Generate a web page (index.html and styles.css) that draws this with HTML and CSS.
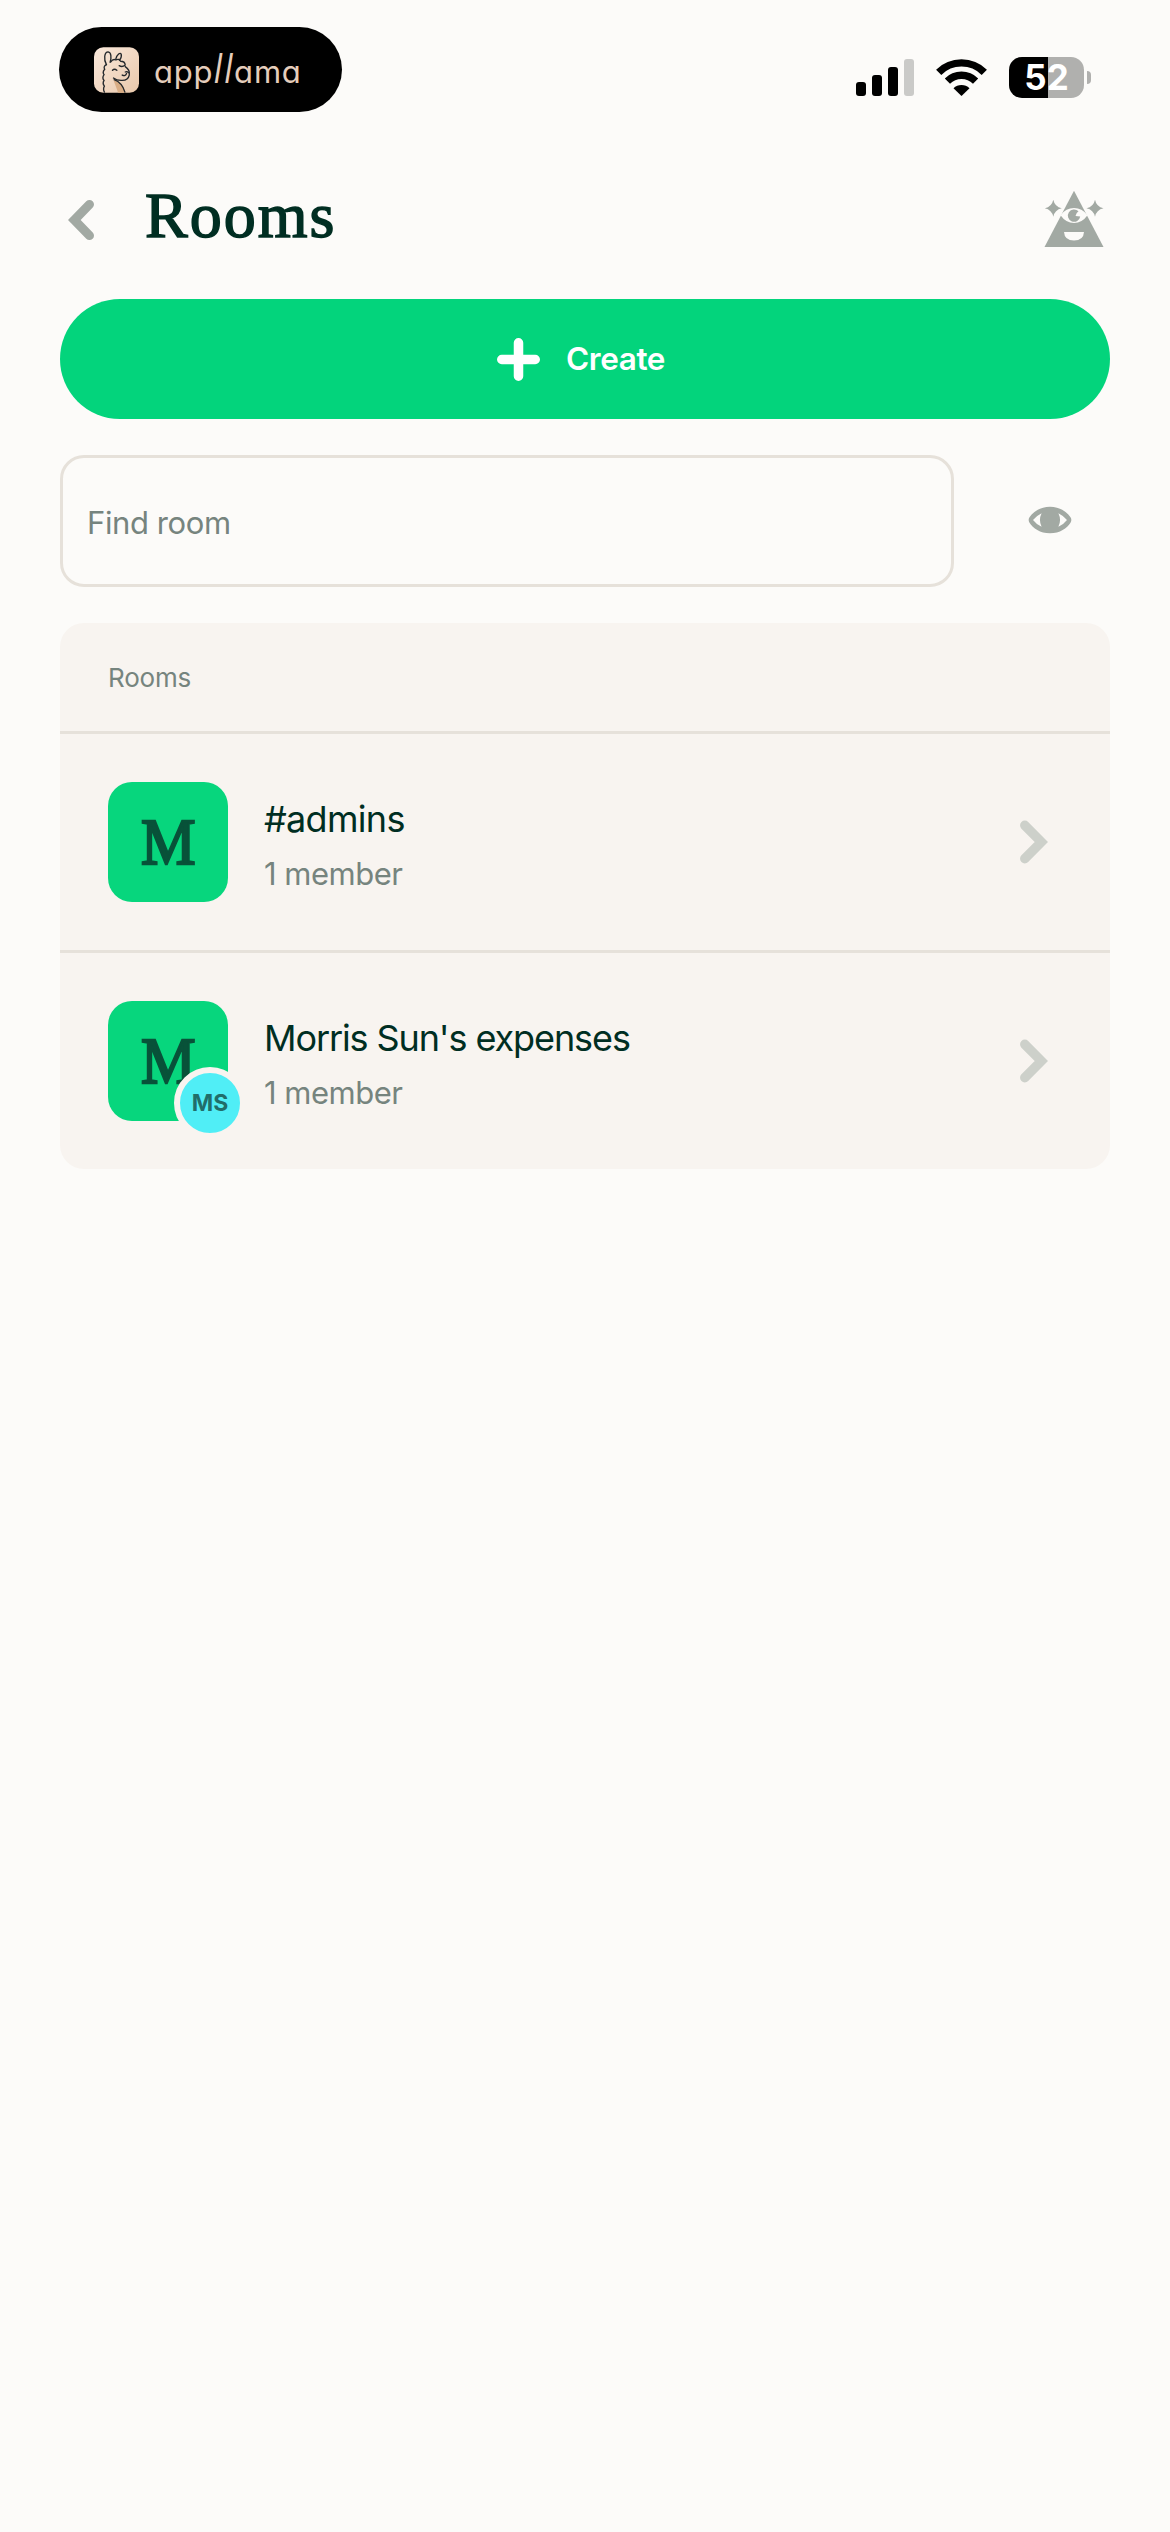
FILE: index.html
```html
<!DOCTYPE html>
<html lang="en">
<head>
<meta charset="utf-8">
<title>Rooms</title>
<link rel="stylesheet" href="styles.css">
</head>
<body>
<header class="status">
  <div class="brand">
    <svg class="brand-icon" viewBox="0 0 134 136">
      <defs><linearGradient id="sand" x1="0" y1="0" x2="1" y2="1"><stop offset="0" stop-color="#fae9dc"/><stop offset="1" stop-color="#e9c8ab"/></linearGradient></defs>
      <rect width="134" height="136" rx="28" fill="url(#sand)"/>
      <path d="M58 98 Q76 104 88 120 L94 136 H72 Z" fill="#d9ad85"/>
      <g fill="none" stroke="#24282c" stroke-width="4" stroke-linecap="round" stroke-linejoin="round">
        <path d="M37 52 C28 36 31 14 42 14 C52 15 52 32 48 45"/>
        <path d="M65 35 C69 21 78 15 81 21 C83 28 79 35 76 39"/>
        <path d="M50 44 Q56 34 65 38 Q74 33 79 42 Q92 42 93 53 Q84 61 75 55"/>
        <path d="M37 52 Q27 57 32 66 Q24 74 30 82 Q23 91 30 99 Q24 108 31 116 Q26 124 31 134"/>
        <path d="M93 58 Q108 68 105 83 Q102 98 84 99 Q68 100 58 92"/>
        <path d="M60 97 Q84 106 92 134"/>
        <path d="M55 69 Q61 63 68 69M93 74 Q98 71 103 76M97 78 Q94 88 84 83"/>
      </g>
    </svg>
    <span class="wordmark">app<span class="tall">ll</span>ama</span>
  </div>
  <div class="indicators">
    <svg width="58" height="38" viewBox="0 0 58 38">
      <rect x="0" y="23" width="10" height="14" rx="3"/><rect x="16" y="16" width="10" height="21" rx="3"/><rect x="32" y="8" width="10" height="29" rx="3"/><rect x="48" y="0" width="10" height="37" rx="3" fill="#cacac8"/>
    </svg>
    <svg class="wifi" width="51" height="38" viewBox="0 0 51 38">
      <g fill="none" stroke="#000" stroke-width="7.4"><path d="M2.7 13.3 A32.3 32.3 0 0 1 48.3 13.3"/><path d="M11.4 22.1 A20 20 0 0 1 39.6 22.1"/></g>
      <path d="M17.5 29.2 A11.4 11.4 0 0 1 33.5 29.2 L25.5 37 Z"/>
    </svg>
    <div class="battery"><span class="level">52</span></div>
    <span class="nub"></span>
  </div>
</header>

<main>
  <div class="titlebar">
    <svg class="back" width="30" height="44" viewBox="0 0 30 44"><path d="M23.5 6.4 L8.3 22 L23.5 37.6" fill="none" stroke="#a2a9a3" stroke-width="9" stroke-linecap="round"/></svg>
    <h1>Rooms</h1>
    <svg class="pyramid" width="60" height="58" viewBox="0 0 60 58">
      <path fill="#a2a9a3" d="M30 .8 L59.5 57 H.5 Z"/>
      <path fill="#a2a9a3" stroke="#fcfbf9" stroke-width="2" paint-order="stroke" d="M9.3 9.8 Q10.7 16.8 17.8 18.3 Q10.7 19.8 9.3 26.8 Q7.8 19.8 .8 18.3 Q7.8 16.8 9.3 9.8 Z M51 9.8 Q52.4 16.8 59.5 18.3 Q52.4 19.8 51 26.8 Q49.5 19.8 42.5 18.3 Q49.5 16.8 51 9.8 Z"/>
      <path fill="#fcfbf9" d="M16.5 25.2 Q22 18 30 18 Q38 18 43.5 25.2 Q38 33 30 33 Q22 33 16.5 25.2 Z M20 42 H40 Q39.5 50.5 30 50.5 Q20.5 50.5 20 42 Z"/>
      <path fill="#a2a9a3" d="M34.5 21.3 A6.2 6.2 0 1 0 36.2 26.5 L31.5 26 Q32.5 22.5 34.5 21.3 Z"/>
    </svg>
  </div>

  <button class="create">
    <svg width="43" height="43" viewBox="0 0 43 43"><path d="M21.5 4.75 V38.25 M4.75 21.5 H38.25" stroke="#fff" stroke-width="9.5" stroke-linecap="round"/></svg>
    <span>Create</span>
  </button>

  <div class="search">
    <div class="field"><span>Find room</span></div>
    <svg class="eye" width="44" height="28" viewBox="0 0 44 28">
      <path fill="#a2a9a3" fill-rule="evenodd" d="M22 .7 C32 .7 39 6 42.5 11.3 Q44.2 14 42.5 16.7 C39 22 32 27.3 22 27.3 C12 27.3 5 22 1.5 16.7 Q-.2 14 1.5 11.3 C5 6 12 .7 22 .7 Z M13.6 7.2 Q8 10 5 14 Q8 18 13.6 20.8 Q10.3 14 13.6 7.2 Z M30.4 7.2 Q36 10 39 14 Q36 18 30.4 20.8 Q33.7 14 30.4 7.2 Z"/>
    </svg>
  </div>

  <section class="card">
    <div class="card-head"><span>Rooms</span></div>
    <div class="row">
      <div class="avatar"><span class="initial">M</span></div>
      <div class="info"><span class="name">#admins</span><span class="members">1 member</span></div>
      <svg class="go" width="30" height="44" viewBox="0 0 30 44"><path d="M5.8 5.3 L22.3 22 L5.8 38.7" fill="none" stroke="#cdd0ca" stroke-width="9.5" stroke-linecap="round"/></svg>
    </div>
    <div class="row">
      <div class="avatar"><span class="initial">M</span><span class="badge">MS</span></div>
      <div class="info"><span class="name long">Morris Sun's expenses</span><span class="members">1 member</span></div>
      <svg class="go" width="30" height="44" viewBox="0 0 30 44"><path d="M5.8 5.3 L22.3 22 L5.8 38.7" fill="none" stroke="#cdd0ca" stroke-width="9.5" stroke-linecap="round"/></svg>
    </div>
  </section>
</main>
</body>
</html>
```
FILE: styles.css
```css
* { box-sizing: border-box; }
body {
  margin: 0;
  min-height: 2532px;
  background: #fcfbf9;
  color: #002e22;
  font-family: Inter, "Liberation Sans", sans-serif;
}
svg { display: block; flex: none; }
.status {
  height: 164px;
  padding: 27px 79px 0 59px;
  display: flex;
  justify-content: space-between;
  align-items: flex-start;
}
.brand {
  width: 283px;
  height: 85px;
  padding-left: 35px;
  border-radius: 43px;
  background: #000;
  display: flex;
  align-items: center;
  gap: 15px;
}
.brand-icon { width: 45px; height: 46px; }
.wordmark {
  color: #e5cdbb;
  font-size: 31px;
  font-weight: 400;
  line-height: 40px;
  letter-spacing: .8px;
  font-feature-settings: "cv11";
}
.tall { font-size: 41px; font-weight: 300; font-style: italic; }
.indicators { display: flex; align-items: flex-start; padding-top: 30px; height: 80px; }
.indicators > svg { margin-top: 2px; }
.indicators > .wifi { margin-left: 22px; }
.battery {
  width: 75px;
  height: 41px;
  margin-left: 22px;
  border-radius: 13px;
  background: linear-gradient(90deg, #000 39px, #b0b0ae 39px);
  color: #fff;
  display: flex;
  align-items: center;
  justify-content: center;
}
.level { font-size: 35px; font-weight: 700; line-height: 41px; }
.nub { width: 4px; height: 13px; margin: 14px 0 0 3px; border-radius: 0 5px 5px 0; background: #b0b0ae; }

main { padding: 0 60px; }
.titlebar { height: 135px; display: flex; align-items: flex-start; }
.back { margin: 34px 0 0 6px; }
h1 {
  margin: 16px 0 0 49px;
  font: 400 64px/72px "Liberation Serif", serif;
  -webkit-text-stroke: 1.5px #002e22;
  letter-spacing: 2px;
}
.pyramid { margin: 26px 6px 0 auto; }
.create {
  width: 100%;
  height: 120px;
  padding: 0 8px 0 0;
  border: 0;
  border-radius: 60px;
  background: #03d47c;
  color: #fff;
  font: 600 31.5px/40px Inter, "Liberation Sans", sans-serif;
  letter-spacing: -.4px;
  display: flex;
  align-items: center;
  justify-content: center;
  gap: 26px;
}
.create span { margin-top: -1px; }
.search { display: flex; align-items: center; margin-top: 36px; height: 132px; }
.field {
  width: 894px;
  height: 132px;
  padding: 3px 0 0 24px;
  border: 3px solid #e6e1da;
  border-radius: 24px;
  display: flex;
  align-items: center;
  font-size: 31px;
  letter-spacing: -.4px;
  color: #76847e;
}
.eye { margin: 0 0 3px 74px; }
.card {
  margin-top: 36px;
  border-radius: 24px;
  background: #f8f4f0;
}
.card-head {
  height: 108px;
  padding-left: 48px;
  display: flex;
  align-items: center;
  font-size: 26px;
  letter-spacing: -.2px;
  color: #76847e;
}
.row {
  height: 219px;
  padding: 0 60px 0 48px;
  border-top: 3px solid #e6e1da;
  display: flex;
  align-items: center;
}
.avatar {
  position: relative;
  width: 120px;
  height: 120px;
  border-radius: 24px;
  background: #07d67d;
  display: flex;
  align-items: center;
  justify-content: center;
}
.initial {
  font: 400 66px/80px "Liberation Serif", serif;
  color: #085239;
  -webkit-text-stroke: 2.4px #085239;
  transform: scaleX(.93);
}
.badge {
  position: absolute;
  left: 66px;
  top: 66px;
  width: 72px;
  height: 72px;
  border: 6px solid #f8f4f0;
  border-radius: 50%;
  background: #50eef6;
  color: #216e6a;
  font-size: 23px;
  font-weight: 700;
  display: flex;
  align-items: center;
  justify-content: center;
}
.info { margin: 6px 0 0 36px; display: flex; flex-direction: column; gap: 13px; }
.name { font-size: 36px; line-height: 44px; letter-spacing: -.7px; }
.name.long { letter-spacing: -1.1px; }
.members { font-size: 31px; line-height: 40px; letter-spacing: -.5px; color: #76847e; }
.go { margin-left: auto; margin-right: 1px; }
```
